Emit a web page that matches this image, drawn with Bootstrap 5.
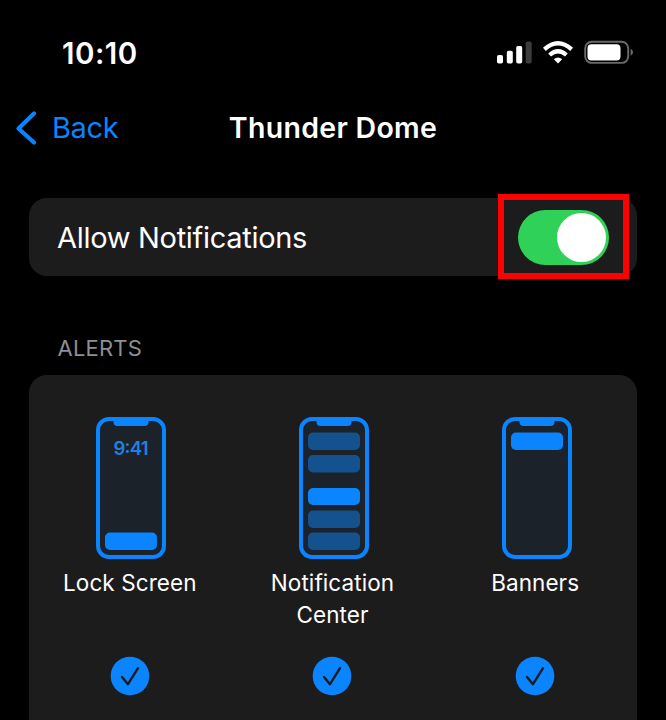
<!DOCTYPE html>
<html lang="en" data-bs-theme="dark">
<head>
<meta charset="utf-8">
<meta name="viewport" content="width=device-width, initial-scale=1">
<title>Thunder Dome</title>
<link href="https://cdn.jsdelivr.net/npm/bootstrap@5.3.0/dist/css/bootstrap.min.css" rel="stylesheet">
<style>
  body { background: #000; color: #fff; font-family: Inter, "Liberation Sans", sans-serif; }
  .screen { width: 666px; height: 720px; }
  .status-bar { height: 84px; padding: 20px 33px 0 62px; }
  .clock { font-size: 29.5px; font-weight: 600; line-height: 36px; letter-spacing: .5px; margin-top: 15px; }
  .status-icons { margin-top: 20px; }
  .title-bar { height: 88px; padding: 0 15px; }
  .back-link { color: #0a84ff; font-size: 29px; letter-spacing: -.4px; gap: 15px; }
  .screen-title { font-size: 28.5px; font-weight: 600; letter-spacing: .3px; }
  .panel { background: #1c1c1d; border-radius: 18px; margin: 0 29px; }
  .allow-row { height: 78px; margin-top: 26px; padding: 0 8px 0 28px; font-size: 29px; letter-spacing: -.3px; }
  .allow-text { padding-top: 2px; }
  .highlight { width: 131px; height: 85px; border: 6px solid #f00; margin: -5px 0 -3px; padding-top: 2px; flex: none; }
  .toggle { width: 91px; height: 55px; border-radius: 28px; background: #30d158; padding-right: 3px; }
  .knob { width: 49px; height: 49px; background: #fff; }
  .section-label { color: #8e8e93; font-size: 22px; line-height: 28px; letter-spacing: .2px; padding-left: 57.500px; margin-top: 58px; margin-bottom: 13px; }
  .alerts { height: 345px; border-radius: 18px 18px 0 0; padding-top: 42px; }
  .phone-icon { margin-left: 1.800px; }
  .alert-label { font-size: 22.5px; line-height: 32px; letter-spacing: .08px; height: 64px; margin: 8px 1px 25px 0; }
  .check-icon { margin-right: 1.500px; }
  svg text { font-family: Inter, "Liberation Sans", sans-serif; }
</style>
</head>
<body>
<main class="screen overflow-hidden d-flex flex-column">
  <header class="status-bar d-flex justify-content-between align-items-start">
    <div class="clock">10:10</div>
    <div class="status-icons d-flex">
      <svg width="136" height="25" viewBox="0 0 136 25" aria-label="Signal, Wi-Fi and battery">
        <g fill="#fff">
          <rect x="0" y="15" width="6" height="8.5" rx="1.8"/>
          <rect x="9.8" y="10.7" width="6" height="12.8" rx="1.8"/>
          <rect x="19.2" y="6" width="6" height="17.5" rx="1.8"/>
          <rect x="28.7" y="1.5" width="6" height="22" rx="1.8" fill="#3c3c3e"/>
          <path d="M61 23.400 56.800 19.200Q61 15.600 65.200 19.200Z"/>
        </g>
        <path d="M47.400 9.400Q61-2.800 74.600 9.400M52.600 15Q61 7.600 69.400 15" fill="none" stroke="#fff" stroke-width="4.200"/>
        <rect x="88.200" y="1.700" width="43" height="21.200" rx="6.500" fill="none" stroke="#6a6a6c" stroke-width="1.900"/>
        <rect x="90.500" y="4.200" width="33" height="16.300" rx="4" fill="#fff"/>
        <path d="M133.600 8.800Q136 10.200 136 12.300T133.600 15.800Z" fill="#6a6a6c"/>
      </svg>
    </div>
  </header>

  <nav class="title-bar row g-0 align-items-center">
    <a href="#" class="back-link col d-flex align-items-center text-decoration-none">
      <svg width="22" height="36" viewBox="0 0 22 36" fill="none" stroke="#0a84ff" stroke-width="4.200" stroke-linecap="round" stroke-linejoin="round"><path d="M19 3.500 3.500 18.500 19 32.500"/></svg>
      <span>Back</span>
    </a>
    <h1 class="screen-title col-auto m-0">Thunder Dome</h1>
    <div class="col"></div>
  </nav>

  <section class="panel allow-row d-flex align-items-center justify-content-between">
    <span class="allow-text">Allow Notifications</span>
    <div class="highlight d-flex align-items-center justify-content-center">
      <div class="toggle d-flex align-items-center justify-content-end" role="switch" aria-checked="true" aria-label="Allow Notifications">
        <div class="knob rounded-circle"></div>
      </div>
    </div>
  </section>

  <h2 class="section-label fw-normal">ALERTS</h2>

  <svg class="d-none">
    <symbol id="phone" viewBox="0 0 70 142">
      <rect x="2" y="2" width="66" height="138" rx="11" fill="#1b2229" stroke="#0a84ff" stroke-width="4"/>
      <path d="M16 2H54Q52.500 3 52.500 5 52.500 9 48.500 9H21.500Q17.500 9 17.500 5 17.500 3 16 2Z" fill="#0a84ff"/>
    </symbol>
    <symbol id="check" viewBox="0 0 40 40">
      <circle cx="20" cy="20" r="19.300" fill="#0a84ff"/>
      <path d="M12 21 18 28.200 28 12.200" fill="none" stroke="#1c1c1e" stroke-width="2.400" stroke-linecap="round" stroke-linejoin="round"/>
    </symbol>
  </svg>

  <section class="panel alerts row g-0 text-center align-content-start">
    <div class="col-4 d-flex flex-column align-items-center">
      <svg class="phone-icon" width="70" height="142"><use href="#phone"/>
        <text x="35" y="37.500" text-anchor="middle" textLength="35" font-size="18.500" font-weight="600" fill="#2180e0">9:41</text>
        <rect x="9" y="115.500" width="52" height="17.500" rx="5" fill="#0a84ff"/>
      </svg>
      <div class="alert-label">Lock Screen</div>
      <svg class="check-icon" width="40" height="40"><use href="#check"/></svg>
    </div>
    <div class="col-4 d-flex flex-column align-items-center">
      <svg class="phone-icon" width="70" height="142"><use href="#phone"/>
        <g fill="#14528f">
          <rect x="9" y="15.500" width="52" height="17.500" rx="5"/>
          <rect x="9" y="38" width="52" height="17.500" rx="5"/>
          <rect x="9" y="71" width="52" height="17" rx="5" fill="#0a84ff"/>
          <rect x="9" y="93.500" width="52" height="17.500" rx="5"/>
          <rect x="9" y="115.500" width="52" height="17.500" rx="5"/>
        </g>
      </svg>
      <div class="alert-label">Notification<br>Center</div>
      <svg class="check-icon" width="40" height="40"><use href="#check"/></svg>
    </div>
    <div class="col-4 d-flex flex-column align-items-center">
      <svg class="phone-icon" width="70" height="142"><use href="#phone"/>
        <rect x="9" y="15.500" width="52" height="17.500" rx="5" fill="#0a84ff"/>
      </svg>
      <div class="alert-label">Banners</div>
      <svg class="check-icon" width="40" height="40"><use href="#check"/></svg>
    </div>
  </section>
</main>
<script src="https://cdn.jsdelivr.net/npm/bootstrap@5.3.0/dist/js/bootstrap.bundle.min.js"></script>
</body>
</html>
